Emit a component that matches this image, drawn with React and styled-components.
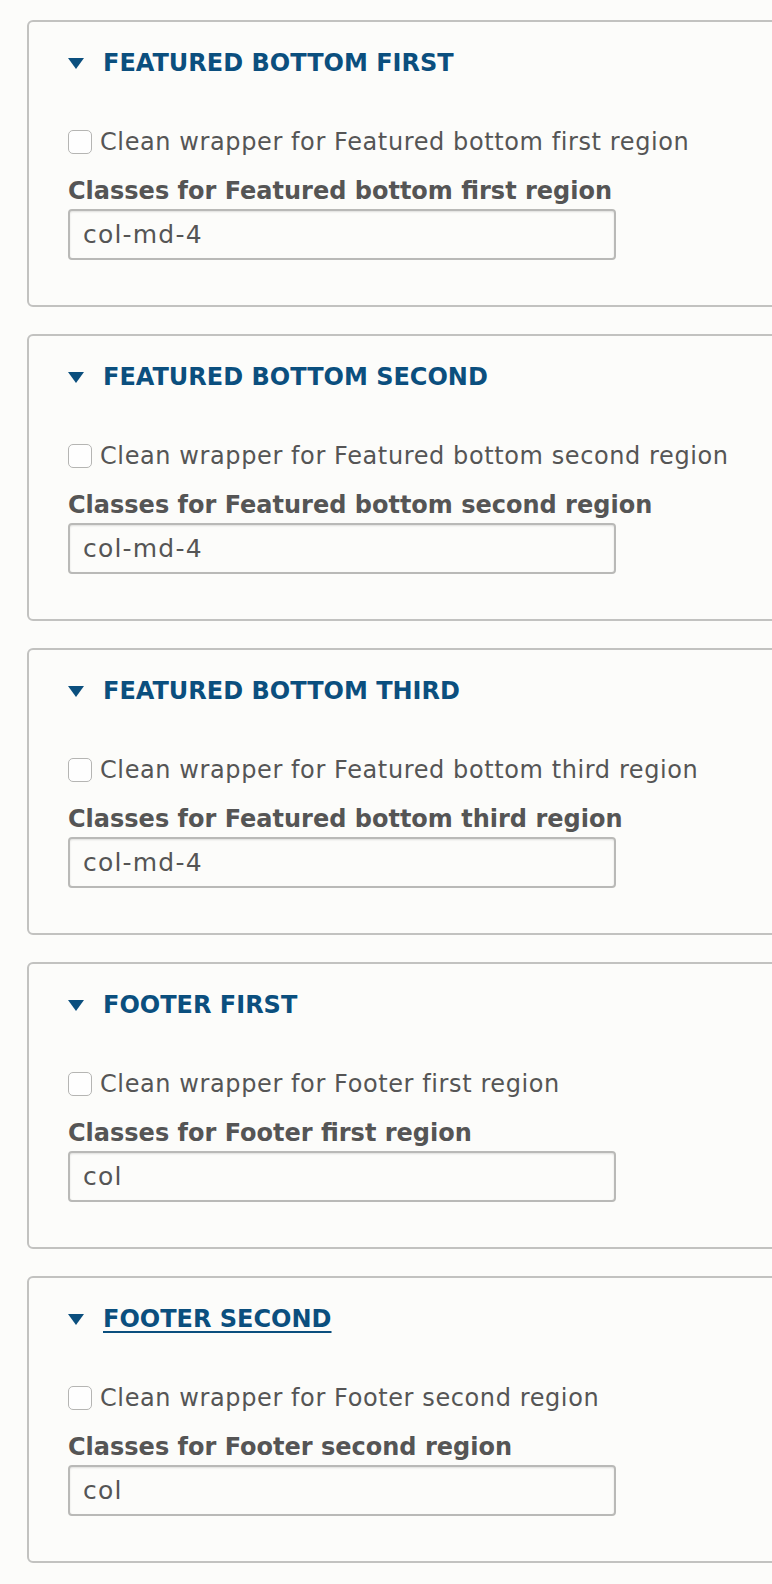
import React from "react";
import styled, { createGlobalStyle } from "styled-components";

const GlobalStyle = createGlobalStyle`
  body {
    margin: 0;
    background: #fcfcfa;
    overflow: hidden;
    font-family: "DejaVu Sans", "Liberation Sans", sans-serif;
  }
`;

const Page = styled.div`
  display: flex;
  flex-direction: column;
  gap: 27px;
  padding: 20px 0 40px 27px;
`;

const Panel = styled.section`
  display: flex;
  flex-direction: column;
  margin-right: -30px;
  padding: 0 0 45px 39px;
  border: 2px solid #c2c2c0;
  border-radius: 6px;
`;

const Summary = styled.div`
  display: flex;
  align-items: center;
  gap: 19px;
  height: 30px;
  margin-top: 26px;
  color: #0b4f7e;
`;

const Arrow = styled.span`
  width: 0;
  height: 0;
  border-left: 8.5px solid transparent;
  border-right: 8.5px solid transparent;
  border-top: 11px solid #0b4f7e;
  margin-top: 1px;
`;

const Title = styled.span`
  font-size: 24px;
  font-weight: bold;
  text-transform: uppercase;
  text-decoration: ${(p) => (p.$underline ? "underline" : "none")};
  text-decoration-thickness: 2px;
  text-underline-offset: 4px;
`;

const CheckRow = styled.label`
  display: flex;
  align-items: center;
  gap: 8px;
  height: 30px;
  margin-top: 49px;
  color: #555555;
  font-size: 24px;
  letter-spacing: 0.6px;
`;

const Box = styled.span`
  flex: none;
  width: 24px;
  height: 24px;
  border: 1.5px solid #b5b5b3;
  border-radius: 5px;
  background: #fefefe;
  box-sizing: border-box;
`;

const FieldLabel = styled.div`
  height: 30px;
  line-height: 30px;
  margin-top: 19px;
  color: #555555;
  font-size: 24px;
  font-weight: bold;
`;

const Input = styled.div`
  box-sizing: border-box;
  width: 548px;
  height: 51px;
  margin-top: 3px;
  padding-left: 13px;
  display: flex;
  align-items: center;
  border: 2px solid #b9b9b7;
  border-radius: 4px;
  box-shadow: inset 0 1px 2px rgba(0, 0, 0, 0.12);
  color: #555555;
  font-size: 25px;
  letter-spacing: 1.2px;
`;

const regions = [
  { title: "Featured bottom first", value: "col-md-4" },
  { title: "Featured bottom second", value: "col-md-4" },
  { title: "Featured bottom third", value: "col-md-4" },
  { title: "Footer first", value: "col" },
  { title: "Footer second", value: "col", underline: true },
];

export default function App() {
  return (
    <>
      <GlobalStyle />
      <Page>
        {regions.map((r) => (
          <Panel key={r.title}>
            <Summary>
              <Arrow />
              <Title $underline={r.underline}>{r.title}</Title>
            </Summary>
            <CheckRow>
              <Box />
              Clean wrapper for {r.title} region
            </CheckRow>
            <FieldLabel>Classes for {r.title} region</FieldLabel>
            <Input>{r.value}</Input>
          </Panel>
        ))}
      </Page>
    </>
  );
}
